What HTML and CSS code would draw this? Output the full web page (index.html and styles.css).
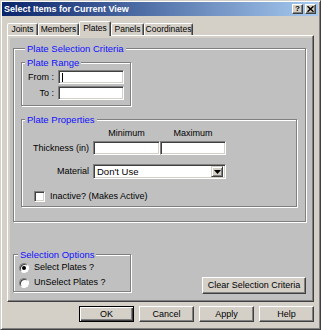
FILE: index.html
```html
<!DOCTYPE html>
<html>
<head>
<meta charset="utf-8">
<title>Select Items for Current View</title>
<link rel="stylesheet" href="styles.css">
</head>
<body>
<div class="window">
  <div class="titlebar">
    <span class="title">Select Items for Current View</span>
    <div class="tbtns">
      <span class="tbtn">?</span>
      <span class="tbtn"><svg width="7" height="6" viewBox="0 0 7 6"><path d="M0.5 0.3 L6.5 5.7 M6.5 0.3 L0.5 5.7" stroke="#000" stroke-width="1.5"/></svg></span>
    </div>
  </div>
  <div class="tabs">
    <div class="tab w-joints">Joints</div>
    <div class="tab w-members">Members</div>
    <div class="tab w-plates active">Plates</div>
    <div class="tab w-panels">Panels</div>
    <div class="tab w-coords">Coordinates</div>
  </div>
  <div class="page">
    <div class="panel">
      <div class="group g-criteria">
        <div class="legend">Plate Selection Criteria</div>
        <div class="group g-range">
          <div class="legend inner">Plate Range</div>
          <div class="rrow first"><span class="rlbl">From :</span><div class="field f-range"><span class="caret"></span></div></div>
          <div class="rrow"><span class="rlbl">To :</span><div class="field f-range"></div></div>
        </div>
        <div class="group g-props">
          <div class="legend inner">Plate Properties</div>
          <div class="prow p-head"><span class="plbl"></span><span class="colhead">Minimum</span><span class="colhead narrow">Maximum</span></div>
          <div class="prow p-thick"><span class="plbl">Thickness (in)</span><div class="pair"><div class="field f-min"></div><div class="field f-max"></div></div></div>
          <div class="prow p-mat"><span class="plbl">Material</span><div class="select"><span class="sel-text">Don't Use</span><span class="sel-btn"><svg width="7" height="4" viewBox="0 0 7 4"><polygon points="0,0 7,0 3.5,4" fill="#000"/></svg></span></div></div>
          <div class="check"><span class="cbox"></span><span>Inactive? (Makes Active)</span></div>
        </div>
      </div>
      <div class="bottom-row">
        <div class="group g-sel">
          <div class="legend">Selection Options</div>
          <div class="radio-row"><span class="radio on"></span><span>Select Plates ?</span></div>
          <div class="radio-row second"><span class="radio"></span><span>UnSelect Plates ?</span></div>
        </div>
        <div class="btn clear">Clear Selection Criteria</div>
      </div>
    </div>
  </div>
  <div class="buttons">
    <div class="btn dlg default">OK</div>
    <div class="btn dlg">Cancel</div>
    <div class="btn dlg">Apply</div>
    <div class="btn dlg">Help</div>
  </div>
</div>
</body>
</html>
```
FILE: styles.css
```css
* { box-sizing: border-box; }
html, body { margin: 0; padding: 0; }
body {
  background: #d4d0c8;
  font-family: "Liberation Sans", Arial, sans-serif;
  font-size: 9px;
  line-height: 13px;
  color: #000;
}
.window {
  width: 321px;
  height: 330px;
  background: #d4d0c8;
  border: 1px solid;
  border-color: #d4d0c8 #404040 #404040 #d4d0c8;
  box-shadow: inset 1px 1px #fff, inset -1px -1px #808080;
  padding: 1px 2px 2px 1px;
  display: flex;
  flex-direction: column;
}
.titlebar {
  height: 14px;
  display: flex;
  align-items: center;
  justify-content: space-between;
  background: linear-gradient(to right, #0a246a, #a6caf0);
  padding-left: 2px;
}
.title {
  color: #fff;
  font-weight: bold;
  font-size: 9px;
  line-height: 14px;
}
.tbtns { display: flex; gap: 2px; margin-right: 2px; }
.tbtn {
  width: 11px;
  height: 10px;
  background: #d4d0c8;
  border: 1px solid;
  border-color: #fff #404040 #404040 #fff;
  box-shadow: inset -1px -1px #808080;
  display: flex;
  align-items: center;
  justify-content: center;
  font-weight: bold;
  font-size: 8px;
  line-height: 8px;
}
.tabs {
  margin: 5px 0 0 5px;
  height: 14px;
  display: flex;
  align-items: flex-end;
}
.tab {
  height: 12px;
  background: #d4d0c8;
  border: 1px solid;
  border-bottom: none;
  border-color: #fff #404040 transparent #fff;
  border-radius: 2px 2px 0 0;
  box-shadow: inset -1px 0 #808080;
  text-align: center;
  font-size: 8.5px;
  line-height: 11px;
  white-space: nowrap;
}
.tab.active {
  height: 15px;
  margin-bottom: -1px;
  position: relative;
  z-index: 1;
  line-height: 12px;
}
.w-joints { width: 31px; }
.w-members { width: 41px; }
.w-plates { width: 32px; }
.w-panels { width: 33px; }
.w-coords { width: 49px; }
.page {
  margin-left: 5px;
  width: 307px;
  height: 267px;
  border: 1px solid;
  border-color: #fff #404040 #404040 #fff;
  box-shadow: inset -1px -1px #808080;
  padding: 2px 1px 1px 2px;
  display: flex;
}
.panel {
  flex: 1;
  background: #c0c0c0;
  display: flex;
  flex-direction: column;
}
.group {
  border: 1px solid #808080;
  box-shadow: inset 1px 1px #fff, 1px 1px #fff;
}
.legend {
  width: max-content;
  margin: -7px 0 0 4px;
  padding: 0 2px;
  background: #c0c0c0;
  color: #1010ff;
  font-size: 9.5px;
  line-height: 13px;
}
.legend.inner { margin-left: 3px; }
.g-criteria {
  margin: 10px 0 0 3px;
  width: 293px;
  height: 174px;
  padding-left: 7px;
}
.g-range {
  margin-top: 7px;
  width: 110px;
  height: 44px;
}
.rrow {
  display: flex;
  align-items: center;
  gap: 4px;
  height: 14px;
  margin-top: 2px;
}
.rrow.first { margin-top: 1px; }
.rlbl { width: 32px; text-align: right; }
.field {
  height: 14px;
  background: #fff;
  border: 1px solid;
  border-color: #808080 #fff #fff #808080;
  box-shadow: inset 1px 1px #404040, inset -1px -1px #d4d0c8;
  padding: 2px 0 0 2px;
}
.f-range { width: 66px; }
.caret {
  display: block;
  width: 1px;
  height: 9px;
  margin-left: 1px;
  background: #000;
}
.g-props {
  margin-top: 13px;
  width: 276px;
  height: 88px;
}
.prow {
  display: flex;
  align-items: center;
  gap: 4px;
}
.plbl { width: 67px; text-align: right; flex: none; white-space: nowrap; }
.p-head { margin-top: 1px; height: 13px; }
.colhead { width: 67px; text-align: center; margin-right: -4px; }
.colhead.narrow { width: 66px; }
.p-thick { margin-top: 1px; height: 14px; }
.pair { display: flex; }
.f-min { width: 67px; }
.f-max { width: 66px; }
.p-mat { margin-top: 9px; height: 15px; }
.select {
  width: 133px;
  height: 15px;
  background: #fff;
  border: 1px solid;
  border-color: #808080 #fff #fff #808080;
  box-shadow: inset 1px 1px #404040, inset -1px -1px #d4d0c8;
  display: flex;
  align-items: center;
  justify-content: space-between;
  padding: 0 2px 0 3px;
}
.sel-text { line-height: 13px; font-size: 9.5px; }
.sel-btn {
  width: 12px;
  height: 11px;
  background: #d4d0c8;
  border: 1px solid;
  border-color: #d4d0c8 #404040 #404040 #d4d0c8;
  box-shadow: inset 1px 1px #fff, inset -1px -1px #808080;
  display: flex;
  align-items: center;
  justify-content: center;
}
.check {
  display: flex;
  align-items: center;
  gap: 5px;
  margin: 12px 0 0 12px;
  height: 11px;
}
.cbox {
  width: 11px;
  height: 11px;
  background: #fff;
  border: 1px solid;
  border-color: #808080 #fff #fff #808080;
  box-shadow: inset 1px 1px #404040, inset -1px -1px #d4d0c8;
}
.bottom-row {
  margin-top: auto;
  display: flex;
  justify-content: space-between;
  align-items: flex-end;
  padding: 0 6px 6px 3px;
}
.g-sel {
  width: 118px;
  height: 38px;
  margin-bottom: 2px;
}
.radio-row {
  display: flex;
  align-items: center;
  gap: 5px;
  height: 13px;
  padding-left: 5px;
}
.radio-row.second { margin-top: 2px; }
.radio {
  width: 10px;
  height: 10px;
  border-radius: 50%;
  background: #fff;
  border: 1px solid;
  border-color: #808080 #fff #fff #808080;
  box-shadow: inset 1px 1px #404040;
  display: flex;
  align-items: center;
  justify-content: center;
}
.radio.on::after {
  content: "";
  width: 4px;
  height: 4px;
  border-radius: 50%;
  background: #000;
}
.btn {
  background: #d4d0c8;
  border: 1px solid;
  border-color: #fff #404040 #404040 #fff;
  box-shadow: inset -1px -1px #808080;
  display: flex;
  align-items: center;
  justify-content: center;
  white-space: nowrap;
}
.clear { width: 104px; height: 17px; }
.buttons {
  margin-top: 4px;
  display: flex;
  justify-content: flex-end;
  gap: 5px;
  padding-right: 4px;
}
.dlg { width: 55px; height: 16px; }
.dlg.default {
  border-color: #000;
  box-shadow: inset 1px 1px #fff, inset -1px -1px #404040, inset -2px -2px #808080;
}
```
